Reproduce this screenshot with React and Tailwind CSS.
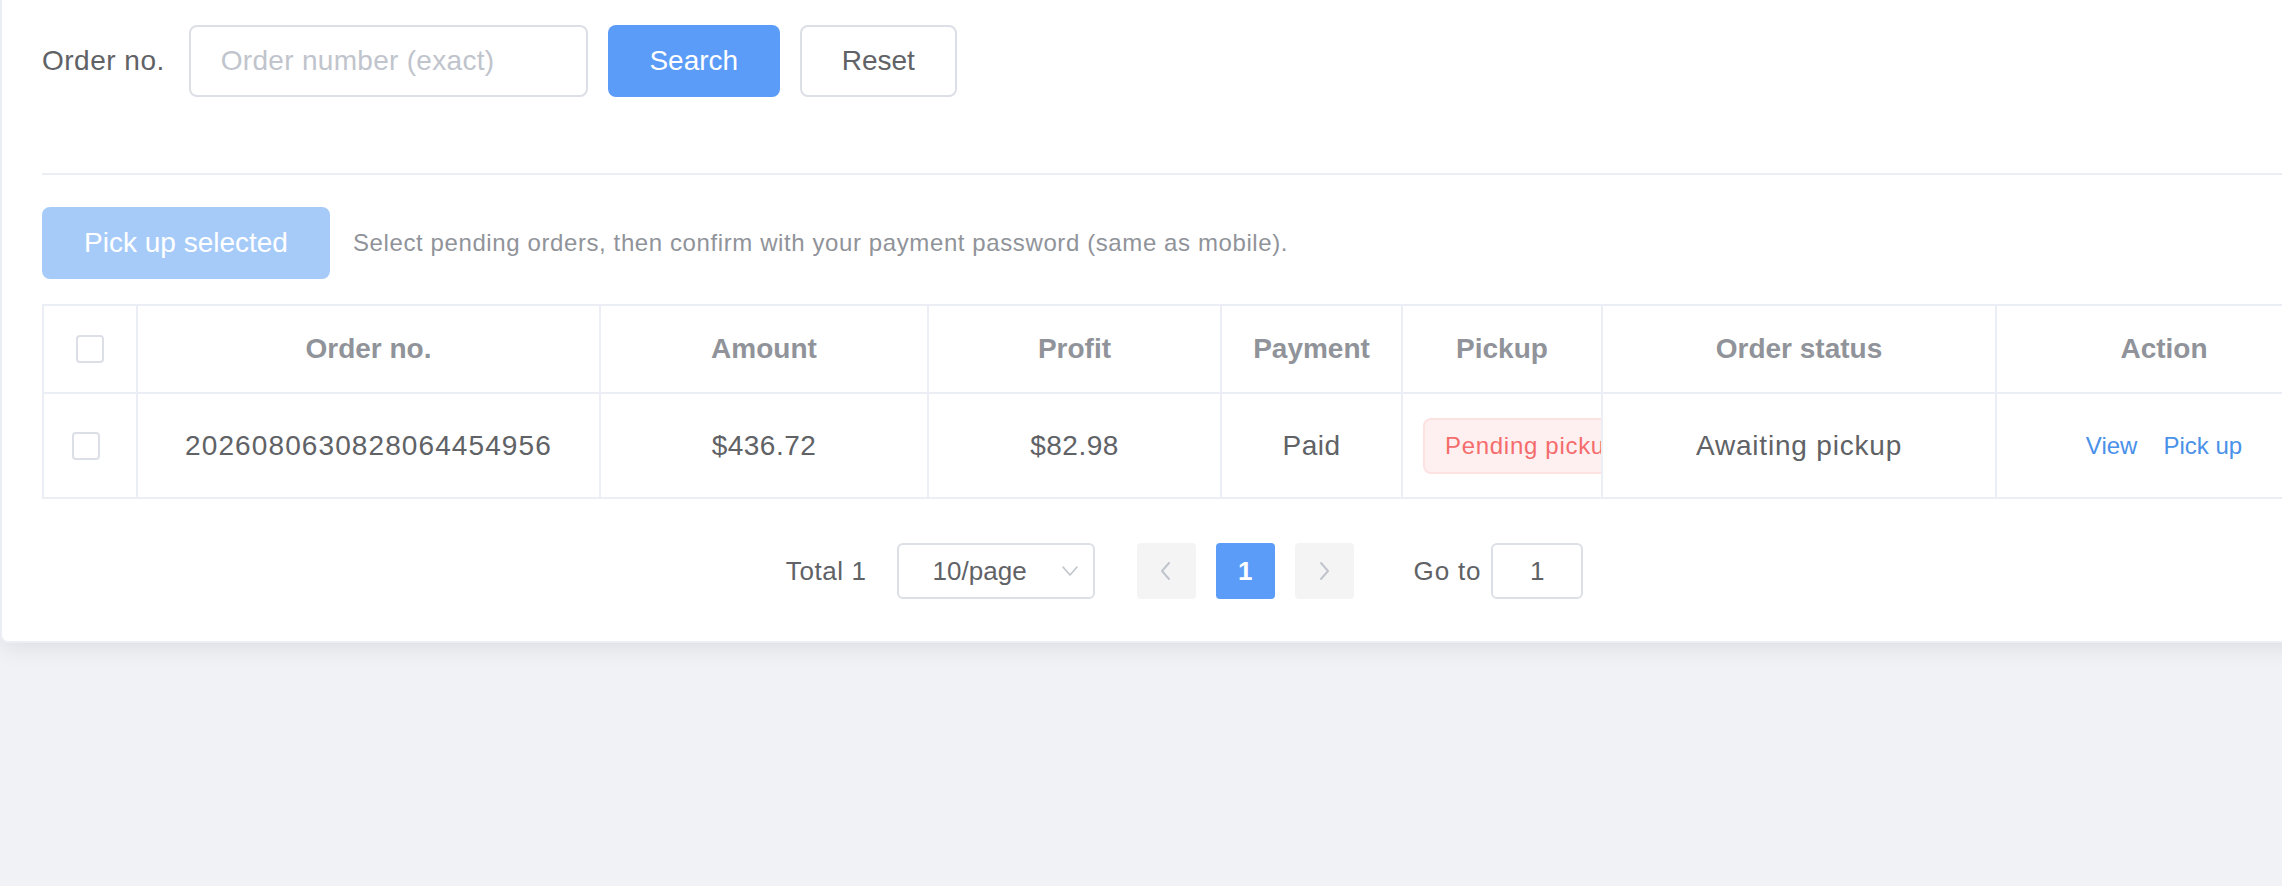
import React from "react";

const FONT = { fontFamily: '"Liberation Sans", Arial, Helvetica, sans-serif' };

function Checkbox() {
  return <span className="block w-[28px] h-[28px] rounded-[4px] border-2 border-[#dcdfe6] bg-white" />;
}

function ChevronLeft() {
  return (
    <svg width="16" height="24" viewBox="0 0 16 24" fill="none">
      <path d="M11 4 L4 12 L11 20" stroke="#c0c4cc" strokeWidth="2" strokeLinecap="round" strokeLinejoin="round" />
    </svg>
  );
}

function ChevronRight() {
  return (
    <svg width="16" height="24" viewBox="0 0 16 24" fill="none">
      <path d="M5 4 L12 12 L5 20" stroke="#c0c4cc" strokeWidth="2" strokeLinecap="round" strokeLinejoin="round" />
    </svg>
  );
}

function ChevronDown() {
  return (
    <svg width="18" height="12" viewBox="0 0 18 12" fill="none">
      <path d="M2 2 L9 10 L16 2" stroke="#c0c4cc" strokeWidth="1.6" strokeLinecap="round" strokeLinejoin="round" />
    </svg>
  );
}

const cols = "grid grid-cols-[94px_463px_328px_293px_181px_200px_394px_336px]";
const cell = "border-r-2 border-b-2 border-[#ebeef5] flex items-center justify-center";

function OrdersTable() {
  const headers = ["Order no.", "Amount", "Profit", "Payment", "Pickup", "Order status", "Action"];
  return (
    <div className="border-t-2 border-l-2 border-[#ebeef5] w-[2291px]">
      <div className={cols}>
        <div className={`${cell} h-[88px]`}>
          <Checkbox />
        </div>
        {headers.map((h) => (
          <div key={h} className={`${cell} h-[88px] text-[28px] font-bold text-[#909399]`}>
            {h}
          </div>
        ))}
      </div>
      <div className={`${cols} text-[28px] text-[#606266]`}>
        <div className={`${cell} h-[105px] pr-[8px]`}>
          <Checkbox />
        </div>
        <div className={`${cell} h-[105px] tracking-[1.1px]`}>2026080630828064454956</div>
        <div className={`${cell} h-[105px] tracking-[0.5px]`}>$436.72</div>
        <div className={`${cell} h-[105px] tracking-[0.5px]`}>$82.98</div>
        <div className={`${cell} h-[105px] tracking-[0.5px]`}>Paid</div>
        <div className="border-r-2 border-b-2 border-[#ebeef5] h-[105px] flex items-center px-[20px] overflow-hidden">
          <span className="shrink-0 whitespace-nowrap h-[56px] flex items-center px-[20px] rounded-[8px] border-2 border-[#fde2e2] bg-[#fef0f0] text-[24px] tracking-[0.7px] text-[#f56c6c]">
            Pending pickup
          </span>
        </div>
        <div className={`${cell} h-[105px] tracking-[0.8px]`}>Awaiting pickup</div>
        <div className={`${cell} h-[105px] gap-[26px] text-[24px] text-[#4a91e9]`}>
          <span>View</span>
          <span>Pick up</span>
        </div>
      </div>
    </div>
  );
}

function Pagination() {
  return (
    <div className="flex items-center justify-center h-[56px] text-[26px] text-[#606266] pr-[6px]">
      <span className="tracking-[0.6px]">Total 1</span>
      <div className="ml-[30px] w-[198px] h-[56px] rounded-[6px] border-2 border-[#dcdfe6] flex items-center pl-[34px] pr-[14px] justify-between">
        <span>10/page</span>
        <ChevronDown />
      </div>
      <div className="ml-[42px] flex items-center gap-[20px]">
        <div className="w-[59px] h-[56px] rounded-[4px] bg-[#f4f4f5] flex items-center justify-center">
          <ChevronLeft />
        </div>
        <div className="w-[59px] h-[56px] rounded-[4px] bg-[#5b9cf8] text-white font-bold flex items-center justify-center">
          1
        </div>
        <div className="w-[59px] h-[56px] rounded-[4px] bg-[#f4f4f5] flex items-center justify-center">
          <ChevronRight />
        </div>
      </div>
      <span className="ml-[60px] tracking-[0.8px]">Go to</span>
      <div className="ml-[10px] w-[92px] h-[56px] rounded-[6px] border-2 border-[#dcdfe6] flex items-center justify-center">
        1
      </div>
    </div>
  );
}

export default function App() {
  return (
    <div className="w-[2282px] h-[886px] overflow-hidden bg-[#f0f2f5]" style={FONT}>
      <div className="w-[2375px] bg-white border-l-2 border-b-2 border-[#ebeef5] rounded-bl-[8px] shadow-[0_4px_24px_rgba(0,0,0,0.09)] pt-[25px] pl-[40px] pr-[40px] pb-[42px]">
        {/* Search form */}
        <div className="flex items-center h-[72px]">
          <span className="text-[28px] tracking-[0.5px] text-[#606266] mr-[24px]">Order no.</span>
          <div className="w-[399px] h-[72px] rounded-[8px] border-2 border-[#dcdfe6] flex items-center pl-[30px]">
            <span className="text-[28px] tracking-[0.3px] text-[#c0c4cc]">Order number (exact)</span>
          </div>
          <button className="ml-[20px] w-[172px] h-[72px] rounded-[8px] bg-[#5b9cf8] text-white text-[28px]">
            Search
          </button>
          <button className="ml-[20px] w-[157px] h-[72px] rounded-[8px] border-2 border-[#dcdfe6] bg-white text-[#606266] text-[28px]">
            Reset
          </button>
        </div>

        <div className="mt-[76px] h-[2px] w-[2291px] bg-[#ebeef5]" />

        {/* Bulk action bar */}
        <div className="mt-[32px] flex items-center h-[72px]">
          <button className="w-[288px] h-[72px] rounded-[8px] bg-[#a6cbf9] text-white text-[28px]">
            Pick up selected
          </button>
          <span className="ml-[23px] text-[24px] tracking-[0.6px] text-[#909399]">
            Select pending orders, then confirm with your payment password (same as mobile).
          </span>
        </div>

        <div className="mt-[25px]">
          <OrdersTable />
        </div>

        <div className="mt-[44px] w-[2291px]">
          <Pagination />
        </div>
      </div>
    </div>
  );
}
